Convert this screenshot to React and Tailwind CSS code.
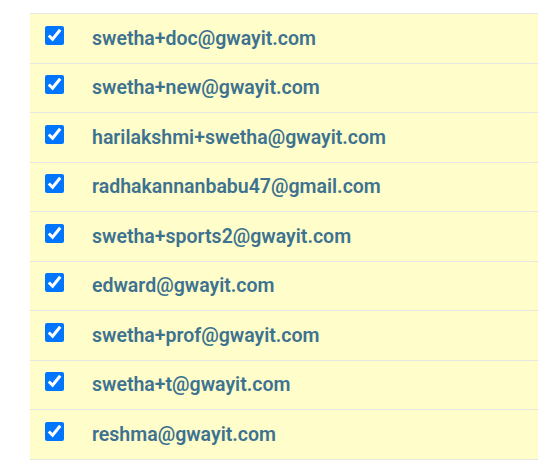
const emails = [
  'swetha+doc@gwayit.com',
  'swetha+new@gwayit.com',
  'harilakshmi+swetha@gwayit.com',
  'radhakannanbabu47@gmail.com',
  'swetha+sports2@gwayit.com',
  'edward@gwayit.com',
  'swetha+prof@gwayit.com',
  'swetha+t@gwayit.com',
  'reshma@gwayit.com',
];

export default function App() {
  return (
    <div className="bg-white min-h-[469px] pt-[13px] pl-[30px] font-['Roboto',sans-serif]">
      <table className="w-[520px] border-collapse">
        <tbody>
          {emails.map((email) => (
            <Row key={email} email={email} />
          ))}
        </tbody>
      </table>
    </div>
  );
}

function Row({ email }) {
  return (
    <tr className="bg-[#fffdc9] border-t border-b border-[#e6e6e3] h-[49.5px]">
      <td className="w-[62px] pl-[15px] align-middle">
        <input
          type="checkbox"
          defaultChecked
          className="block w-[19px] h-[19px] m-0 mb-[6px] accent-[#0075ff]"
        />
      </td>
      <td className="align-middle text-[19.5px] font-semibold text-[#3d7290]">
        {email}
      </td>
    </tr>
  );
}
